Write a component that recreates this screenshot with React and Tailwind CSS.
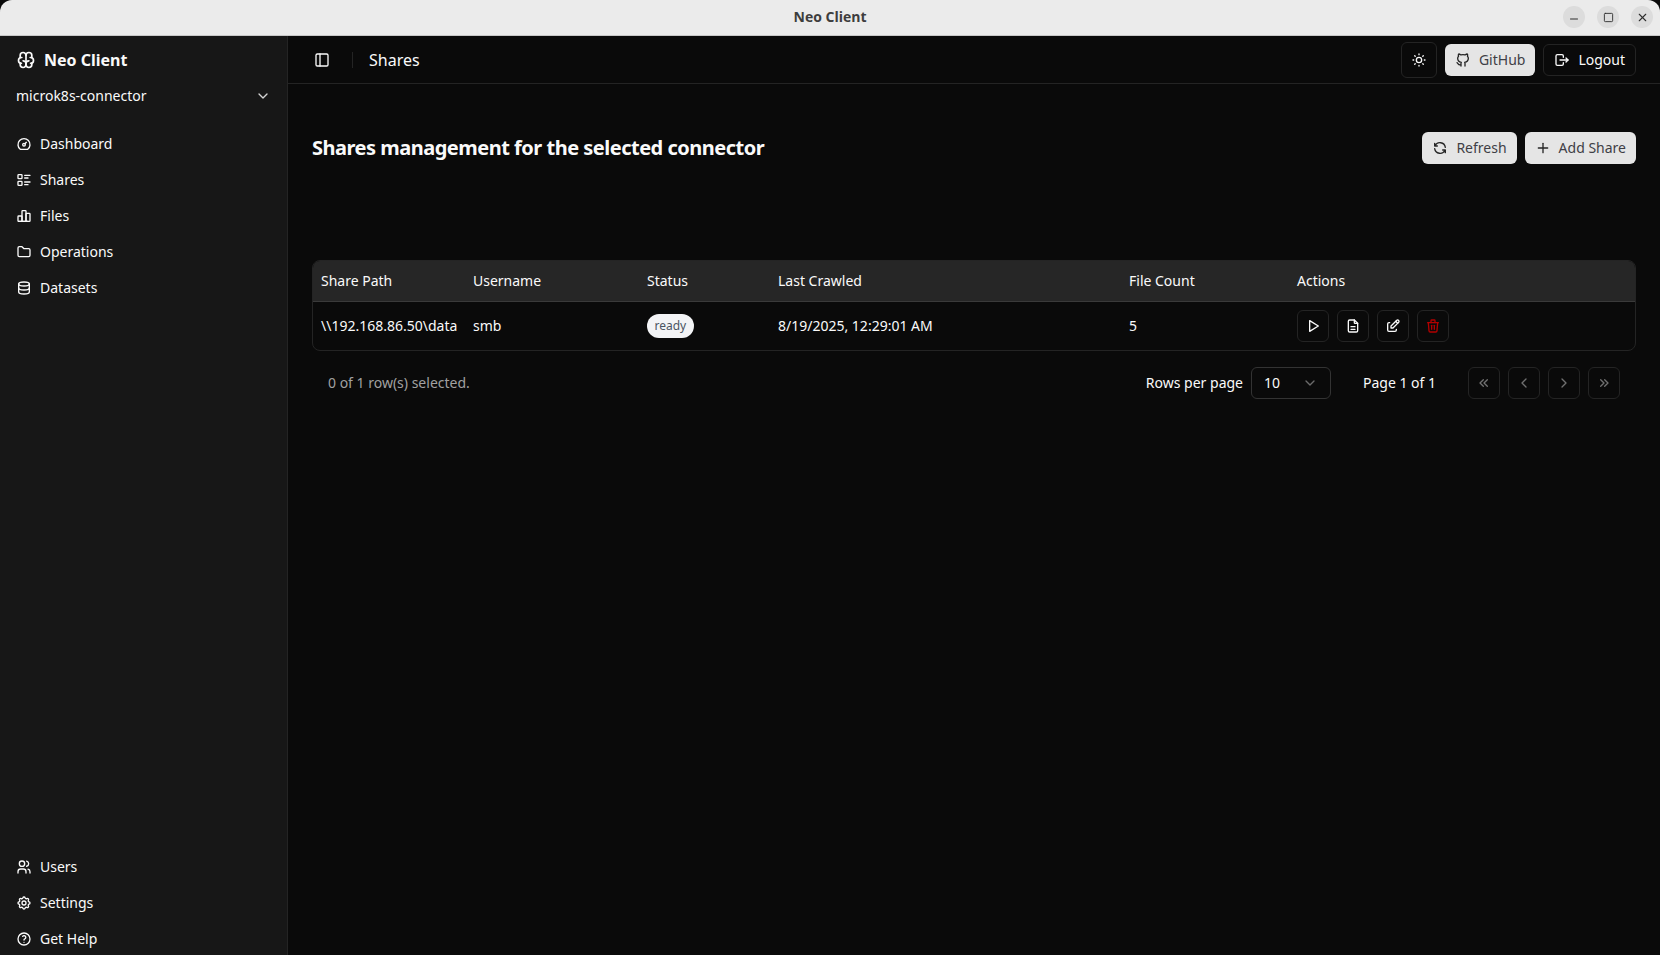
import React from "react";
import { ChevronDown, PanelLeft, Minus, Square, X } from "lucide-react";
import {
  TbBrain, TbDashboard, TbListDetails, TbChartBar, TbFolder, TbDatabase, TbUsers, TbSettings, TbHelp,
  TbSun, TbBrandGithub, TbLogout, TbRefresh, TbPlus, TbPlayerPlay, TbFileDescription, TbEdit, TbTrash,
  TbChevronsLeft, TbChevronLeft, TbChevronRight, TbChevronsRight,
} from "react-icons/tb";

function NavItem({ icon: Icon, label }) {
  return (
    <a className="flex h-8 items-center gap-2 rounded-md px-2 text-sm text-[#fafafa]">
      <Icon className="size-4 shrink-0" />
      <span>{label}</span>
    </a>
  );
}

function IconBtn({ icon: Icon, className = "" }) {
  return (
    <button className={`flex h-8 w-8 items-center justify-center rounded-md border border-[#242424] bg-[#0a0a0a] ${className}`}>
      <Icon className="size-4" />
    </button>
  );
}

function LightBtn({ icon: Icon, label, className = "" }) {
  return (
    <button className={`flex h-8 items-center gap-2 rounded-md bg-[#e5e5e5] text-sm font-normal text-[#3f3f46] ${className}`}>
      <Icon className="size-4 text-[#262626]" />
      {label}
    </button>
  );
}

export default function App() {
  return (
    <div className="flex h-[955px] w-[1660px] flex-col overflow-hidden bg-[#0a0a0a] text-[#fafafa]" style={{ fontFamily: '"Noto Sans", sans-serif' }}>
      <header className="relative flex h-[36px] shrink-0 items-center justify-center rounded-t-[12px] border-b border-[#c8c8c8] bg-[#ebebeb] pb-[2px]">
        <span className="text-[14px] font-bold text-[#3d3d3d]" style={{ fontFamily: '"Open Sans", sans-serif' }}>Neo Client</span>
        <div className="absolute right-[7px] top-[6px] flex gap-[12px]">
          <span className="flex size-[22px] items-center justify-center rounded-full bg-[#dcdcdc] text-[#2e2e2e]"><Minus className="size-[12px] translate-y-[2px]" /></span>
          <span className="flex size-[22px] items-center justify-center rounded-full bg-[#dcdcdc] text-[#2e2e2e]"><Square className="size-[11px]" /></span>
          <span className="flex size-[22px] items-center justify-center rounded-full bg-[#dcdcdc] text-[#2e2e2e]"><X className="size-[13px]" /></span>
        </div>
      </header>

      <div className="flex min-h-0 flex-1">
        <aside className="flex w-[288px] shrink-0 flex-col border-r border-[#242424] bg-[#171717]">
          <div className="flex h-[45px] items-center gap-[8px] pl-[16px] pt-[3px]">
            <TbBrain className="size-[20px]" />
            <span className="text-base font-bold">Neo Client</span>
          </div>
          <div className="flex h-[30px] items-center justify-between pl-[16px] pr-[16px] text-sm">
            <span>microk8s-connector</span>
            <ChevronDown className="size-4 text-[#d4d4d4]" />
          </div>
          <nav className="mt-[17px] flex flex-col gap-[4px] px-[8px]">
            <NavItem icon={TbDashboard} label="Dashboard" />
            <NavItem icon={TbListDetails} label="Shares" />
            <NavItem icon={TbChartBar} label="Files" />
            <NavItem icon={TbFolder} label="Operations" />
            <NavItem icon={TbDatabase} label="Datasets" />
          </nav>
          <nav className="mt-auto flex flex-col gap-[4px] px-[8px]">
            <NavItem icon={TbUsers} label="Users" />
            <NavItem icon={TbSettings} label="Settings" />
            <NavItem icon={TbHelp} label="Get Help" />
          </nav>
        </aside>

        <main className="flex min-w-0 flex-1 flex-col">
          <div className="flex h-[48px] shrink-0 items-center border-b border-[#242424] pl-[26px] pr-[24px]">
            <PanelLeft className="size-4" />
            <span className="ml-[22px] mr-[16px] h-4 w-px bg-[#242424]" />
            <span className="text-base">Shares</span>
            <div className="ml-auto flex items-center gap-2">
              <IconBtn icon={TbSun} className="h-9 w-9 rounded-lg" />
              <LightBtn icon={TbBrandGithub} label="GitHub" className="px-[10px]" />
              <button className="flex h-8 items-center gap-2 rounded-md border border-[#242424] bg-[#0a0a0a] px-[10px] text-sm">
                <TbLogout className="size-4" />
                Logout
              </button>
            </div>
          </div>

          <div className="flex flex-1 flex-col px-[24px] pt-[48px]">
            <div className="flex h-[32px] items-center justify-between">
              <h1 className="text-xl font-bold tracking-tight">Shares management for the selected connector</h1>
              <div className="flex gap-2">
                <LightBtn icon={TbRefresh} label="Refresh" className="px-[10px]" />
                <LightBtn icon={TbPlus} label="Add Share" className="px-[10px]" />
              </div>
            </div>

            <div className="mt-[96px] overflow-hidden rounded-lg border border-[#242424]">
              <div className="grid h-[41px] grid-cols-[152px_173px_132px_351px_168px_1fr] items-center border-b border-[#3a3a3a] bg-[#262626] pl-[8px] text-sm">
                <span>Share Path</span>
                <span>Username</span>
                <span className="pl-[1px]">Status</span>
                <span>Last Crawled</span>
                <span>File Count</span>
                <span>Actions</span>
              </div>
              <div className="grid h-[48px] grid-cols-[152px_173px_132px_351px_168px_1fr] items-center pl-[8px] text-sm">
                <span className="whitespace-nowrap">\\192.168.86.50\data</span>
                <span>smb</span>
                <span className="pl-[1px]">
                  <span className="inline-flex h-[24px] items-center rounded-full bg-[#f3f4f6] px-[7.5px] text-xs font-normal text-[#4b5563]">ready</span>
                </span>
                <span>8/19/2025, 12:29:01 AM</span>
                <span>5</span>
                <div className="flex gap-2">
                  <IconBtn icon={TbPlayerPlay} />
                  <IconBtn icon={TbFileDescription} />
                  <IconBtn icon={TbEdit} />
                  <IconBtn icon={TbTrash} className="text-[#b30000]" />
                </div>
              </div>
            </div>

            <div className="mt-[16px] flex h-[32px] items-center justify-between px-[16px] text-sm">
              <span className="text-[#a1a1a1]">0 of 1 row(s) selected.</span>
              <div className="flex items-center">
                <span>Rows per page</span>
                <div className="ml-2 flex h-8 w-[80px] items-center justify-between rounded-md border border-[#333333] px-3">
                  <span>10</span>
                  <ChevronDown className="size-4 text-[#6b6b6b]" />
                </div>
                <span className="ml-[32px] w-[106px]">Page 1 of 1</span>
                <div className="ml-[-1px] flex gap-2 text-[#707070]">
                  <IconBtn icon={TbChevronsLeft} className="border-[#1a1a1a]" />
                  <IconBtn icon={TbChevronLeft} className="border-[#1a1a1a]" />
                  <IconBtn icon={TbChevronRight} className="border-[#1a1a1a]" />
                  <IconBtn icon={TbChevronsRight} className="border-[#1a1a1a]" />
                </div>
              </div>
            </div>
          </div>
        </main>
      </div>
    </div>
  );
}
